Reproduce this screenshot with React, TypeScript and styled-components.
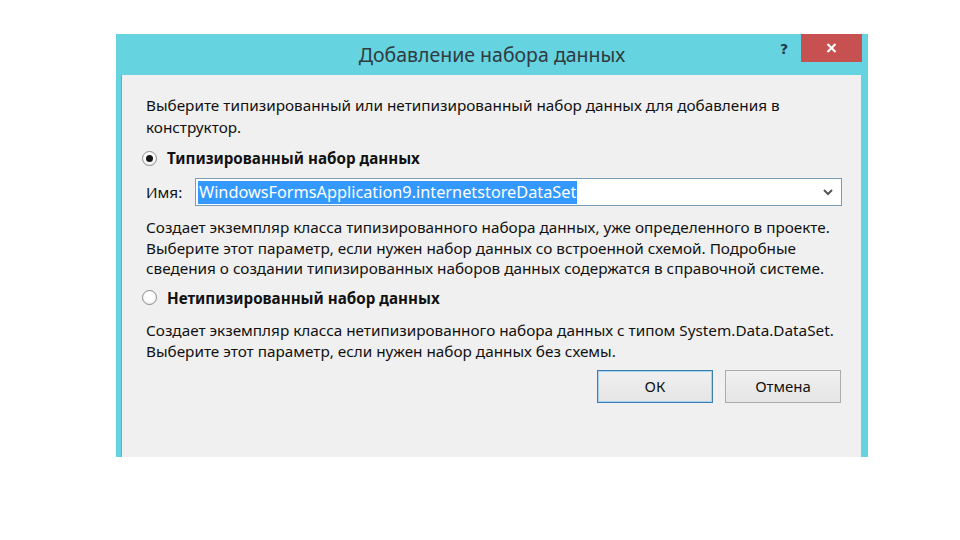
import React from "react";
import styled, { createGlobalStyle } from "styled-components";

const Global = createGlobalStyle`
  html, body { margin: 0; padding: 0; background: #ffffff; }
  body { font-family: "Noto Sans", "Open Sans", sans-serif; }
`;

const Page = styled.div`
  width: 960px;
  height: 540px;
  padding: 34px 0 0 116px;
  box-sizing: border-box;
  background: #ffffff;
`;

const Window = styled.div`
  width: 752px;
  height: 423px;
  background: #65d3e0;
  display: flex;
  flex-direction: column;
  box-sizing: border-box;
  padding: 0 7px 0 5px;
`;

const TitleBar = styled.div`
  height: 41px;
  display: grid;
  grid-template-columns: 1fr auto;
  position: relative;
  flex-shrink: 0;
`;

const Title = styled.div`
  position: absolute;
  left: -5px;
  right: -7px;
  top: 7px;
  text-align: center;
  font-size: 19.5px;
  color: #2f3b40;
  pointer-events: none;
`;

const Controls = styled.div`
  grid-column: 2;
  display: flex;
  align-items: flex-start;
  margin-right: -1px;
`;

const HelpButton = styled.div`
  width: 34px;
  height: 28px;
  display: flex;
  align-items: center;
  justify-content: center;
  font-family: "DejaVu Sans", sans-serif;
  font-weight: bold;
  font-size: 14px;
  color: #1d3d52;
  padding-top: 1px;
`;

const CloseButton = styled.div`
  width: 61px;
  height: 28px;
  background: #c75050;
  display: flex;
  align-items: center;
  justify-content: center;
`;

const Client = styled.div`
  flex: 1;
  background: #f0f0f0;
  border-left: 1px solid #4fb7c4;
  padding: 19px 19px 0 24px;
  color: #111111;
  font-size: 15.3px;
`;

const Paragraph = styled.p<{ $lh: number; $mt: number }>`
  margin: ${(p) => p.$mt}px 0 0 0;
  line-height: ${(p) => p.$lh}px;
  white-space: nowrap;
`;

const RadioRow = styled.label<{ $mt: number }>`
  display: flex;
  align-items: center;
  height: 22px;
  margin-top: ${(p) => p.$mt}px;
  font-weight: bold;
  font-size: 15.2px;
  gap: 10px;
`;

const RadioCircle = styled.span<{ $checked: boolean }>`
  width: 15px;
  height: 15px;
  margin-left: -4px;
  border-radius: 50%;
  border: 1px solid #8c8c8c;
  background: radial-gradient(circle at 50% 40%, #ffffff 40%, #e6e6e6 100%);
  box-sizing: border-box;
  display: flex;
  align-items: center;
  justify-content: center;
  &::after {
    content: "";
    width: 7px;
    height: 7px;
    border-radius: 50%;
    background: ${(p) => (p.$checked ? "#151515" : "transparent")};
  }
`;

const NameRow = styled.div`
  display: flex;
  align-items: center;
  margin-top: 9px;
`;

const NameLabel = styled.span`
  width: 49px;
  flex-shrink: 0;
`;

const Combo = styled.div`
  flex: 1;
  height: 28px;
  box-sizing: border-box;
  border: 1px solid #7a9cb4;
  background: #ffffff;
  display: flex;
  align-items: center;
  padding: 0 8px 0 2px;
`;

const Selected = styled.span`
  background: #3399ff;
  color: #ffffff;
  font-size: 16.3px;
  line-height: 23px;
  padding: 0 1px;
`;

const Chevron = styled.svg`
  margin-left: auto;
`;

const Buttons = styled.div`
  display: flex;
  justify-content: flex-end;
  gap: 12px;
  margin-top: 8px;
  padding-right: 1px;
`;

const Button = styled.button<{ $default?: boolean }>`
  width: 116px;
  height: 33px;
  font-family: inherit;
  font-size: 15px;
  color: #111111;
  border: 1px solid ${(p) => (p.$default ? "#3c7fb1" : "#acacac")};
  box-shadow: ${(p) => (p.$default ? "inset 0 0 0 1px #a6d1ef" : "none")};
  background: linear-gradient(#f0f0f0, #e5e5e5);
  padding: 0;
`;

export default function App() {
  return (
    <>
      <Global />
      <Page>
        <Window>
          <TitleBar>
            <Title>Добавление набора данных</Title>
            <Controls>
              <HelpButton>?</HelpButton>
              <CloseButton>
                <svg width="11" height="10" viewBox="0 0 11 10">
                  <path d="M1.5 1 L9.5 9 M9.5 1 L1.5 9" stroke="#ffffff" strokeWidth="2.2" />
                </svg>
              </CloseButton>
            </Controls>
          </TitleBar>
          <Client>
            <Paragraph $lh={22} $mt={0}>
              Выберите типизированный или нетипизированный набор данных для добавления в
              <br />
              конструктор.
            </Paragraph>
            <RadioRow $mt={9}>
              <RadioCircle $checked />
              Типизированный набор данных
            </RadioRow>
            <NameRow>
              <NameLabel>Имя:</NameLabel>
              <Combo>
                <Selected>WindowsFormsApplication9.internetstoreDataSet</Selected>
                <Chevron width="10" height="7" viewBox="0 0 10 7">
                  <path d="M1 1 L5 5 L9 1" stroke="#555" strokeWidth="2" fill="none" />
                </Chevron>
              </Combo>
            </NameRow>
            <Paragraph $lh={20.5} $mt={11}>
              Создает экземпляр класса типизированного набора данных, уже определенного в проекте.
              <br />
              Выберите этот параметр, если нужен набор данных со встроенной схемой. Подробные
              <br />
              сведения о создании типизированных наборов данных содержатся в справочной системе.
            </Paragraph>
            <RadioRow $mt={8}>
              <RadioCircle $checked={false} />
              Нетипизированный набор данных
            </RadioRow>
            <Paragraph $lh={21} $mt={11}>
              Создает экземпляр класса нетипизированного набора данных с типом System.Data.DataSet.
              <br />
              Выберите этот параметр, если нужен набор данных без схемы.
            </Paragraph>
            <Buttons>
              <Button $default>ОК</Button>
              <Button>Отмена</Button>
            </Buttons>
          </Client>
        </Window>
      </Page>
    </>
  );
}
